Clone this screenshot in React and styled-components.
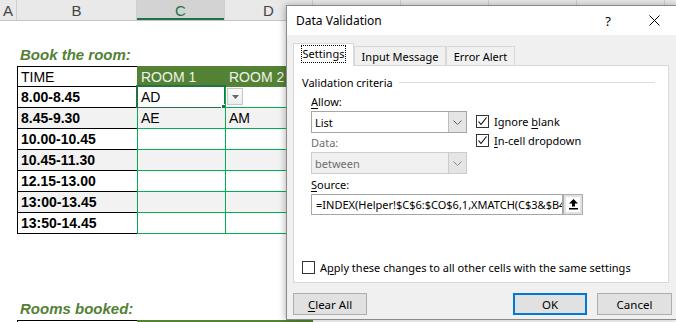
import React from 'react';
import styled, { createGlobalStyle } from 'styled-components';

const sheetFont = `'Liberation Sans', Arial, sans-serif`;
const uiFont = `'Noto Sans', 'Liberation Sans', sans-serif`;

const GlobalStyle = createGlobalStyle`
  html, body { margin: 0; padding: 0; background: #fff; }
  body { overflow: hidden; }
`;

const Screen = styled.div`
  position: relative;
  width: 676px;
  height: 322px;
  overflow: hidden;
  background: #fff;
  font-family: ${sheetFont};
`;

/* ---------- spreadsheet ---------- */

const ColHeaders = styled.div`
  display: flex;
  height: 21px;
  box-sizing: border-box;
  border-bottom: 1px solid #c6c6c6;
  background: #e9e9e9;
`;

const ColHead = styled.div`
  flex: 0 0 ${(p) => p.$w}px;
  box-sizing: border-box;
  display: flex;
  align-items: center;
  justify-content: center;
  border-right: 1px solid #cfcfcf;
  font-size: 15px;
  color: ${(p) => (p.$active ? '#217346' : '#444')};
  background: ${(p) => (p.$active ? '#d3d3d3' : 'transparent')};
  box-shadow: ${(p) => (p.$active ? 'inset 0 -2px 0 #217346' : 'none')};
`;

const SheetBody = styled.div`
  padding: 23px 0 0 17px;
`;

const SheetTitle = styled.div`
  height: 22px;
  line-height: 21px;
  padding-left: 3px;
  font-size: 15px;
  font-weight: 700;
  font-style: italic;
  color: #538135;
`;

const Grid = styled.div`
  display: grid;
  grid-template-columns: 120px 88px 88px;
`;

const Cell = styled.div`
  position: relative;
  box-sizing: border-box;
  height: 21px;
  padding-left: 3px;
  display: flex;
  align-items: center;
  font-size: 14px;
  white-space: nowrap;
  font-weight: ${(p) => (p.$bold ? 700 : 400)};
  color: ${(p) => (p.$head && p.$room ? '#eef2ea' : '#000')};
  background: ${(p) => (p.$head && p.$room ? '#548235' : p.$band ? '#f2f2f2' : '#fff')};
  border-left: 1px solid ${(p) => (p.$room ? (p.$head ? '#548235' : '#00b050') : '#000')};
  border-bottom: 1px solid ${(p) => (p.$room ? (p.$head ? '#548235' : '#00b050') : '#000')};
  border-top: ${(p) => (p.$head ? `1px solid ${p.$room ? '#548235' : '#000'}` : 'none')};
`;

const Selection = styled.div`
  position: absolute;
  left: -2px;
  top: -2px;
  right: -1px;
  bottom: -2px;
  border: 2px solid #217346;
  pointer-events: none;
`;

const FillHandle = styled.div`
  position: absolute;
  right: -4px;
  bottom: -4px;
  width: 5px;
  height: 5px;
  background: #217346;
  border: 1px solid #fff;
`;

const CellDrop = styled.div`
  position: absolute;
  left: 1px;
  top: 1px;
  width: 16px;
  height: 17px;
  box-sizing: border-box;
  border: 1px solid #c6c6c6;
  background: linear-gradient(#fbfbfb, #ececec);
  display: flex;
  align-items: center;
  justify-content: center;
`;

const Spacer = styled.div`
  height: ${(p) => p.$h}px;
`;

/* ---------- dialog ---------- */

const Dialog = styled.div`
  position: absolute;
  left: 286px;
  top: 5px;
  width: 392px;
  height: 315px;
  box-sizing: border-box;
  border: 1px solid #8a8a8a;
  background: #f0f0f0;
  box-shadow: -1px 0 7px rgba(0, 0, 0, 0.28);
  display: flex;
  flex-direction: column;
  font-family: ${uiFont};
  font-size: 11px;
  color: #000;
`;

const TitleBar = styled.div`
  height: 29px;
  flex: 0 0 29px;
  background: #fff;
  display: flex;
  align-items: center;
  padding-left: 9px;
  font-size: 12px;
`;

const TitleText = styled.div`
  flex: 1;
`;

const TitleButton = styled.div`
  width: 46px;
  height: 29px;
  display: flex;
  align-items: center;
  justify-content: center;
  font-size: 13px;
`;

const DialogBody = styled.div`
  padding: 8px 5px 0 6px;
  display: flex;
  flex-direction: column;
`;

const Tabs = styled.div`
  display: flex;
  align-items: flex-end;
  height: 22px;
`;

const Tab = styled.div`
  position: relative;
  z-index: 1;
  box-sizing: border-box;
  width: ${(p) => p.$w}px;
  height: ${(p) => (p.$active ? 23 : 19)}px;
  margin-bottom: ${(p) => (p.$active ? -1 : 0)}px;
  border: 1px solid #d9d9d9;
  border-bottom: none;
  background: ${(p) => (p.$active ? '#fff' : '#f0f0f0')};
  display: flex;
  align-items: center;
  justify-content: center;
  padding-bottom: ${(p) => (p.$active ? 2 : 0)}px;
`;

const Focus = styled.span`
  outline: 1px dotted #000;
  outline-offset: 1px;
  line-height: 14px;
`;

const Panel = styled.div`
  width: 376px;
  height: 218px;
  box-sizing: border-box;
  background: #fff;
  border: 1px solid #d9d9d9;
  padding: 8px 8px 7px 8px;
  display: flex;
  flex-direction: column;
`;

const Legend = styled.div`
  height: 16px;
  display: flex;
  align-items: center;
`;

const LegendLine = styled.div`
  flex: 1;
  height: 1px;
  background: #dcdcdc;
  margin: 0 5px 0 6px;
`;

const Criteria = styled.div`
  margin: 4px 0 0 9px;
  display: flex;
  gap: 9px;
`;

const LeftCol = styled.div`
  width: 156px;
  display: flex;
  flex-direction: column;
`;

const RightCol = styled.div`
  padding-top: 19px;
  display: flex;
  flex-direction: column;
  gap: 3px;
`;

const Label = styled.div`
  height: 16px;
  line-height: 16px;
  margin-top: ${(p) => p.$mt || 0}px;
  color: ${(p) => (p.$disabled ? '#6d6d6d' : '#000')};
`;

const Select = styled.div`
  height: 22px;
  margin-top: 1px;
  box-sizing: border-box;
  border: 1px solid ${(p) => (p.$disabled ? '#cccccc' : '#a6a6a6')};
  background: ${(p) => (p.$disabled ? '#f0f0f0' : '#fff')};
  color: ${(p) => (p.$disabled ? '#6d6d6d' : '#000')};
  display: flex;
`;

const SelectValue = styled.div`
  flex: 1;
  padding-left: 3px;
  display: flex;
  align-items: center;
`;

const SelectArrow = styled.div`
  width: 17px;
  border-left: 1px solid ${(p) => (p.$disabled ? '#cccccc' : '#bdbdbd')};
  background: #e5e5e5;
  display: flex;
  align-items: center;
  justify-content: center;
`;

const CheckRow = styled.div`
  height: 16px;
  display: flex;
  align-items: center;
  gap: 5px;
  margin-top: ${(p) => (p.$bottom ? 'auto' : '0')};
`;

const Box = styled.div`
  width: 13px;
  height: 13px;
  box-sizing: border-box;
  border: 1px solid #333;
  background: #fff;
  display: flex;
  align-items: center;
  justify-content: center;
`;

const U = styled.span`
  text-decoration: underline;
  text-underline-offset: 2px;
`;

const SourceRow = styled.div`
  margin: 1px 0 0 9px;
  display: flex;
  height: 21px;
`;

const SourceInput = styled.div`
  width: 252px;
  box-sizing: border-box;
  border: 1px solid #a6a6a6;
  padding-left: 4px;
  display: flex;
  align-items: center;
  white-space: nowrap;
  overflow: hidden;
  font-size: 11px;
`;

const PickButton = styled.div`
  width: 20px;
  box-sizing: border-box;
  border: 1px solid #adadad;
  background: #fff;
  box-shadow: inset 0 0 0 2px #e1e1e1;
  display: flex;
  align-items: center;
  justify-content: center;
`;

const ButtonRow = styled.div`
  margin-top: 10px;
  display: flex;
  justify-content: space-between;
`;

const ButtonGroup = styled.div`
  display: flex;
  gap: 10px;
`;

const Button = styled.div`
  width: ${(p) => p.$w}px;
  height: 22px;
  box-sizing: border-box;
  border: ${(p) => (p.$primary ? '2px solid #0078d7' : '1px solid #adadad')};
  background: #e1e1e1;
  display: flex;
  align-items: center;
  justify-content: center;
  font-size: 11.5px;
`;

/* ---------- icons ---------- */

const Check = () => (
  <svg width="11" height="11" viewBox="0 0 11 11">
    <polyline points="1.5,5.5 4,8.5 9.5,1.5" fill="none" stroke="#000" strokeWidth="1.1" />
  </svg>
);

const Chevron = ({ color = '#606060' }) => (
  <svg width="9" height="5" viewBox="0 0 9 5">
    <polyline points="0.5,0.5 4.5,4.5 8.5,0.5" fill="none" stroke={color} strokeWidth="1" />
  </svg>
);

const CloseIcon = () => (
  <svg width="11" height="11" viewBox="0 0 11 11">
    <path d="M0.5 0.5 L10.5 10.5 M10.5 0.5 L0.5 10.5" stroke="#000" strokeWidth="1" />
  </svg>
);

const UpArrow = () => (
  <svg width="9" height="11" viewBox="0 0 9 11">
    <path d="M4.5 0 L9 4.5 H6 V7.5 H3 V4.5 H0 Z" fill="#000" />
    <rect x="0" y="9" width="9" height="1.5" fill="#000" />
  </svg>
);

const Triangle = () => (
  <svg width="7" height="4" viewBox="0 0 7 4">
    <polygon points="0,0 7,0 3.5,4" fill="#666" />
  </svg>
);

/* ---------- data ---------- */

const columns = [
  { id: 'A', w: 17 },
  { id: 'B', w: 120 },
  { id: 'C', w: 88, active: true },
  { id: 'D', w: 88 },
  { id: '', w: 88 },
  { id: '', w: 88 },
  { id: '', w: 88 },
  { id: '', w: 88 },
];

const slots = [
  ['8.00-8.45', 'AD', ''],
  ['8.45-9.30', 'AE', 'AM'],
  ['10.00-10.45', '', ''],
  ['10.45-11.30', '', ''],
  ['12.15-13.00', '', ''],
  ['13:00-13.45', '', ''],
  ['13:50-14.45', '', ''],
];

function HeaderRow({ labels = ['TIME', 'ROOM 1', 'ROOM 2'] }) {
  return (
    <>
      <Cell $head>{labels[0]}</Cell>
      <Cell $head $room>{labels[1]}</Cell>
      <Cell $head $room>{labels[2]}</Cell>
    </>
  );
}

function Sheet() {
  return (
    <>
      <ColHeaders>
        {columns.map((c, i) => (
          <ColHead key={i} $w={c.w} $active={c.active}>{c.id}</ColHead>
        ))}
      </ColHeaders>
      <SheetBody>
        <SheetTitle>Book the room:</SheetTitle>
        <Grid>
          <HeaderRow />
          {slots.map(([time, r1, r2], i) => (
            <React.Fragment key={time}>
              <Cell $bold $band={i % 2 === 1}>{time}</Cell>
              <Cell $room $band={i % 2 === 1}>
                {r1}
                {i === 0 && (
                  <Selection>
                    <FillHandle />
                  </Selection>
                )}
              </Cell>
              <Cell $room $band={i % 2 === 1}>
                {r2}
                {i === 0 && (
                  <CellDrop>
                    <Triangle />
                  </CellDrop>
                )}
              </Cell>
            </React.Fragment>
          ))}
        </Grid>
        <Spacer $h={64} />
        <SheetTitle>Rooms booked:</SheetTitle>
        <Grid>
          {/* only the top edge of this header row is in view */}
          <HeaderRow labels={['', '', '']} />
        </Grid>
      </SheetBody>
    </>
  );
}

function ValidationDialog() {
  return (
    <Dialog>
      <TitleBar>
        <TitleText>Data Validation</TitleText>
        <TitleButton>?</TitleButton>
        <TitleButton>
          <CloseIcon />
        </TitleButton>
      </TitleBar>
      <DialogBody>
        <Tabs>
          <Tab $w={61} $active>
            <Focus>Settings</Focus>
          </Tab>
          <Tab $w={92}>Input Message</Tab>
          <Tab $w={69}>Error Alert</Tab>
        </Tabs>
        <Panel>
          <Legend>
            Validation criteria
            <LegendLine />
          </Legend>
          <Criteria>
            <LeftCol>
              <Label>
                <U>A</U>llow:
              </Label>
              <Select>
                <SelectValue>List</SelectValue>
                <SelectArrow>
                  <Chevron />
                </SelectArrow>
              </Select>
              <Label $mt={2} $disabled>
                Data:
              </Label>
              <Select $disabled>
                <SelectValue>between</SelectValue>
                <SelectArrow $disabled>
                  <Chevron color="#8a8a8a" />
                </SelectArrow>
              </Select>
              <Label $mt={3}>
                <U>S</U>ource:
              </Label>
            </LeftCol>
            <RightCol>
              <CheckRow>
                <Box>
                  <Check />
                </Box>
                <span>
                  Ignore <U>b</U>lank
                </span>
              </CheckRow>
              <CheckRow>
                <Box>
                  <Check />
                </Box>
                <span>
                  <U>I</U>n-cell dropdown
                </span>
              </CheckRow>
            </RightCol>
          </Criteria>
          <SourceRow>
            <SourceInput>=INDEX(Helper!$C$6:$CO$6,1,XMATCH(C$3&amp;$B4</SourceInput>
            <PickButton>
              <UpArrow />
            </PickButton>
          </SourceRow>
          <CheckRow $bottom>
            <Box />
            <span>
              A<U>p</U>ply these changes to all other cells with the same settings
            </span>
          </CheckRow>
        </Panel>
        <ButtonRow>
          <Button $w={74}>
            <span>
              <U>C</U>lear All
            </span>
          </Button>
          <ButtonGroup>
            <Button $w={74} $primary>OK</Button>
            <Button $w={75}>Cancel</Button>
          </ButtonGroup>
        </ButtonRow>
      </DialogBody>
    </Dialog>
  );
}

export default function App() {
  return (
    <Screen>
      <GlobalStyle />
      <Sheet />
      <ValidationDialog />
    </Screen>
  );
}
